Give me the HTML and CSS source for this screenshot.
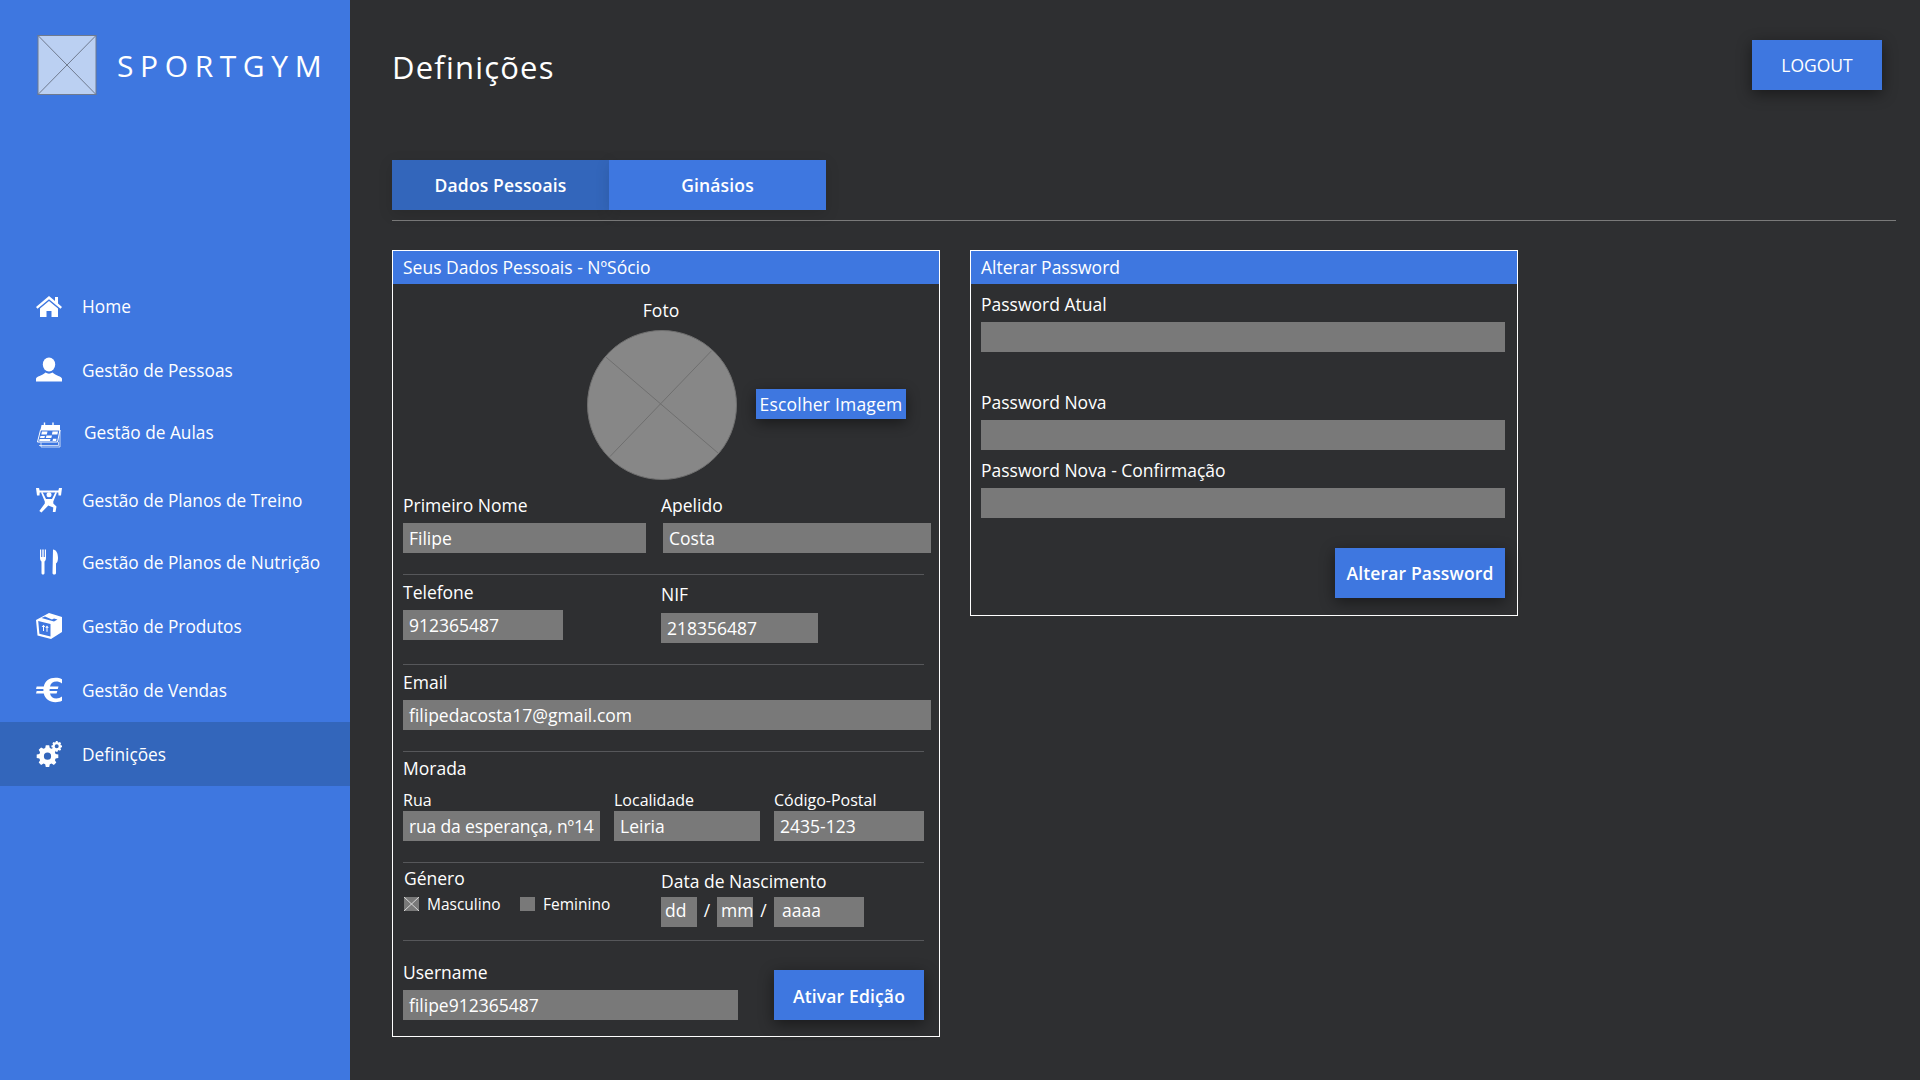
FILE: index.html
```html
<!DOCTYPE html>
<html lang="pt">
<head>
    <meta charset="UTF-8">
    <meta name="viewport" content="width=device-width, initial-scale=1.0">
    <title>SportGym - Definições</title>
    <link rel="stylesheet" href="styles.css">
</head>
<body>
    <div class="app">
        <aside class="sidebar">
            <div class="brand">
                <svg class="brand-logo" viewBox="0 0 59 60">
                    <rect x="0.5" y="0.5" width="58" height="59" fill="#bbd0f2" stroke="#6f7a8e"/>
                    <path d="M0.5 0.5L58.5 59.500M58.5 0.5L0.5 59.500" stroke="#6f7a8e" fill="none"/>
                </svg>
                <span class="brand-name">SPORTGYM</span>
            </div>
            <nav class="nav">
                <a class="nav-item">
                    <svg class="nav-icon" viewBox="0 0 26 26"><path d="M13 3L19 8V4H22V10.500L26 14L24.500 15.800L13 6.300L1.500 15.800L0 14Z"/><path d="M4 15.500L13 8L22 15.500V24H15.500V18H10.500V24H4Z"/></svg>
                    <span>Home</span>
                </a>
                <a class="nav-item">
                    <svg class="nav-icon" viewBox="0 0 26 26"><ellipse cx="13" cy="7.500" rx="6.200" ry="7"/><path d="M0 24.500V21.800C0 19.500 6.500 18.500 9.500 15.500C11.500 17 14.500 17 16.500 15.500C19.500 18.500 26 19.500 26 21.800V24.500Z"/></svg>
                    <span>Gestão de Pessoas</span>
                </a>
                <a class="nav-item nav-aulas">
                    <svg class="nav-icon" viewBox="0 0 26 26">
                        <path d="M5.500 3H24V8H4.500Z"/>
                        <path d="M8.500 0.500V4.500M17 0.500V4.500" stroke="#fff" stroke-width="1.400" fill="none"/>
                        <path d="M4.500 8H24L21.500 20H1.500Z" fill="none" stroke="#fff"/>
                        <path d="M6 9.500H11.500L10.800 12.500H5.300ZM16.500 9.500H22L21.400 12.500H15.900ZM10.500 13.500H16L15.300 16H9.800ZM4.500 14H9L8.400 16H4ZM9 17H14.500L14 19H3.200L3.600 17ZM17 16.800H20.500L20.100 19H16.500Z"/>
                        <path d="M24 8V25H5V20.500" fill="none" stroke="#fff" stroke-opacity="0.7"/>
                        <path d="M22.500 20V23.500H3" fill="none" stroke="#fff" stroke-opacity="0.7"/>
                    </svg>
                    <span>Gestão de Aulas</span>
                </a>
                <a class="nav-item nav-treino">
                    <svg class="nav-icon" viewBox="0 0 26 26">
                        <path d="M0 1H3L3.600 3.500H22.400L23 1H26L25 8.500H22.500L22.300 5.500H3.700L3.500 8.500H1Z"/>
                        <circle cx="13" cy="7.800" r="2.500"/>
                        <path d="M6.500 5L10 12H16L19.500 5L21 5.500L17.300 14.500V16.500L20.500 19.500L19.500 25H16.800L17.300 20.500L12.300 18.500L5.500 25.500L3.300 24L8.800 16.500V14.500L5 5.500Z"/>
                    </svg>
                    <span>Gestão de Planos de Treino</span>
                </a>
                <a class="nav-item nav-nutricao">
                    <svg class="nav-icon" viewBox="0 0 26 26"><path d="M4 0.500H5.200V8H6.300V0.500H7.700V8H8.800V0.500H10V9C10 11 9.200 12 8.500 12.500V24C8.500 26 5.500 26 5.500 24V12.500C4.800 12 4 11 4 9Z"/><path d="M17 0.500C20 0.500 22 4 22 9C22 12 21 14 20 14.500V24C20 26 16.500 26 16.500 24Z"/></svg>
                    <span>Gestão de Planos de Nutrição</span>
                </a>
                <a class="nav-item">
                    <svg class="nav-icon" viewBox="0 0 26 26"><path fill-rule="evenodd" d="M13 0L26 4V19L15 26L1.500 22.500L0 7ZM9 3.500L5.500 5L18 8.500L21.500 6.500L18 5.500L16 6.500ZM2.200 8L3.400 20.800L14.500 23.600V11Z"/><path d="M7 14V18H8V14H9.300L7.500 11.800L5.700 14ZM10.500 14.800V18.800H11.500V14.800H12.800L11 12.600L9.200 14.800Z"/></svg>
                    <span>Gestão de Produtos</span>
                </a>
                <a class="nav-item">
                    <svg class="nav-icon" viewBox="0 0 26 26"><path d="M26 2.200V6.500C24 5 22.300 4.500 20.300 4.500C17 4.500 14.700 6.300 14 9.500H22.500L21.800 12H13.600V14H21.300L20.600 16.500H14C14.700 19.700 17 21.500 20.300 21.500C22.500 21.500 24.300 20.800 26 19.500V23.800C24 24.800 22 25.200 19.500 25.200C13.200 25.200 9 21.800 7.800 16.500H0L0.700 14H7.400V12H0L0.700 9.500H7.800C9 4.200 13.200 0.800 19.500 0.800C22 0.800 24 1.200 26 2.200Z"/></svg>
                    <span>Gestão de Vendas</span>
                </a>
                <a class="nav-item active">
                    <svg class="nav-icon" viewBox="0 0 26 26"><path fill-rule="evenodd" d="M9.800 7H13.200L13.800 9.700L15.500 10.500L17.900 9.100L20.300 11.500L18.900 13.900L19.600 15.600L22.300 16.200V19.600L19.600 20.200L18.900 21.900L20.300 24.300L17.900 26.700L15.500 25.300L13.800 26L13.200 28.700H9.800L9.200 26L7.500 25.300L5.100 26.700L2.700 24.300L4.100 21.900L3.400 20.200L0.700 19.600V16.200L3.400 15.600L4.100 13.900L2.700 11.500L5.100 9.100L7.500 10.500L9.200 9.700ZM11.500 14.300A3.600 3.600 0 1 0 11.500 21.500A3.600 3.600 0 1 0 11.500 14.300Z" transform="translate(0 -2.700)"/><path fill-rule="evenodd" d="M20.500 0H22.200L22.500 1.200L23.400 1.600L24.500 1L25.700 2.200L25.100 3.300L25.400 4.200L26.600 4.500V6.200L25.400 6.500L25.100 7.400L25.700 8.500L24.500 9.700L23.400 9.100L22.500 9.500L22.200 10.700H20.500L20.200 9.500L19.300 9.100L18.200 9.700L17 8.500L17.600 7.400L17.200 6.500L16 6.200V4.500L17.200 4.200L17.600 3.300L17 2.200L18.200 1L19.300 1.600L20.200 1.200ZM21.300 3.300A2 2 0 1 0 21.300 7.300A2 2 0 1 0 21.300 3.300Z" transform="translate(-0.600 0)"/></svg>
                    <span>Definições</span>
                </a>
            </nav>
        </aside>

        <main class="content">
            <header class="topbar">
                <h1 class="page-title">Definições</h1>
                <button class="btn btn-logout">LOGOUT</button>
            </header>

            <div class="tabs">
                <button class="tab tab-active">Dados Pessoais</button>
                <button class="tab">Ginásios</button>
            </div>

            <div class="panels">
                <section class="panel">
                    <div class="panel-head">Seus Dados Pessoais - NºSócio</div>
                    <div class="panel-body">
                        <div class="photo-row">
                            <div class="photo-col">
                                <label class="field-label photo-label">Foto</label>
                                <svg class="photo" viewBox="0 0 150 150">
                                    <circle cx="75" cy="75" r="74.500" fill="#878787" stroke="#6f6f6f"/>
                                    <path d="M18.500 26.700L131 123M124.600 20.700L22.800 126.700" stroke="#6f6f6f" fill="none"/>
                                </svg>
                            </div>
                            <button class="btn btn-photo">Escolher Imagem</button>
                        </div>

                        <div class="row row-name">
                            <div class="field w-nome">
                                <label class="field-label">Primeiro Nome</label>
                                <div class="input">Filipe</div>
                            </div>
                            <div class="field col-right">
                                <label class="field-label">Apelido</label>
                                <div class="input w-apelido">Costa</div>
                            </div>
                        </div>
                        <hr class="sep">

                        <div class="row">
                            <div class="field w-tel">
                                <label class="field-label">Telefone</label>
                                <div class="input">912365487</div>
                            </div>
                            <div class="field col-right col-nif">
                                <label class="field-label">NIF</label>
                                <div class="input w-nif">218356487</div>
                            </div>
                        </div>
                        <hr class="sep">

                        <div class="row">
                            <div class="field w-full">
                                <label class="field-label">Email</label>
                                <div class="input">filipedacosta17@gmail.com</div>
                            </div>
                        </div>
                        <hr class="sep">

                        <div class="row-morada">
                            <label class="field-label">Morada</label>
                            <div class="address">
                                <div class="field">
                                    <label class="small-label">Rua</label>
                                    <div class="input input-rua">rua da esperança, nº14</div>
                                </div>
                                <div class="field">
                                    <label class="small-label">Localidade</label>
                                    <div class="input">Leiria</div>
                                </div>
                                <div class="field">
                                    <label class="small-label">Código-Postal</label>
                                    <div class="input">2435-123</div>
                                </div>
                            </div>
                        </div>
                        <hr class="sep">

                        <div class="row row-extra">
                            <div class="field w-genero">
                                <label class="field-label">Género</label>
                                <div class="checks">
                                    <span class="check check-on">
                                        <svg viewBox="0 0 15 14"><path d="M0 0L15 14M15 0L0 14" stroke="#d8d8d8" fill="none"/></svg>
                                    </span>
                                    <span class="check-text check-text-m">Masculino</span>
                                    <span class="check"></span>
                                    <span class="check-text">Feminino</span>
                                </div>
                            </div>
                            <div class="field col-date">
                                <label class="field-label">Data de Nascimento</label>
                                <div class="date">
                                    <div class="input input-dd">dd</div>
                                    <span class="date-sep">/</span>
                                    <div class="input input-dd">mm</div>
                                    <span class="date-sep">/</span>
                                    <div class="input input-yy">aaaa</div>
                                </div>
                            </div>
                        </div>
                        <hr class="sep sep-tight">

                        <div class="row row-user">
                            <div class="field w-user">
                                <label class="field-label">Username</label>
                                <div class="input">filipe912365487</div>
                            </div>
                            <button class="btn btn-action btn-edit">Ativar Edição</button>
                        </div>
                    </div>
                </section>

                <section class="panel">
                    <div class="panel-head">Alterar Password</div>
                    <div class="panel-body panel-body-pw">
                        <div class="field pw-first">
                            <label class="field-label">Password Atual</label>
                            <div class="input"></div>
                        </div>
                        <div class="field pw-second">
                            <label class="field-label">Password Nova</label>
                            <div class="input"></div>
                        </div>
                        <div class="field pw-third">
                            <label class="field-label">Password Nova - Confirmação</label>
                            <div class="input"></div>
                        </div>
                        <button class="btn btn-action btn-password">Alterar Password</button>
                    </div>
                </section>
            </div>
        </main>
    </div>
</body>
</html>
```

FILE: styles.css
```css
* {
    box-sizing: border-box;
}
body {
    margin: 0;
    background-color: #2e2f31;
    color: #fff;
    font-family: "Open Sans", "Noto Sans", sans-serif;
    font-size: 17.5px;
}
.app {
    display: flex;
    min-height: 1080px;
}

/* sidebar */
.sidebar {
    width: 350px;
    flex-shrink: 0;
    background-color: #3e77e0;
}
.brand {
    display: flex;
    align-items: flex-start;
    height: 95px;
    padding: 35px 0 0 37px;
}
.brand-logo {
    width: 60px;
    height: 60px;
}
.brand-name {
    margin-left: 20px;
    font-size: 30px;
    letter-spacing: 6.6px;
    line-height: 62px;
}
.nav {
    margin-top: 179px;
}
.nav-item {
    display: flex;
    align-items: center;
    height: 64px;
    padding-left: 36px;
}
.nav-item span {
    margin-left: 20px;
    font-size: 17.3px;
}
.nav-item.active {
    background-color: #3366bb;
}
.nav-icon {
    width: 26px;
    height: 26px;
    fill: #fff;
    flex-shrink: 0;
}
.nav-aulas {
    margin-top: -2px;
}
.nav-aulas span {
    margin-left: 22px;
}
.nav-aulas .nav-icon {
    margin-top: 6px;
}
.nav-treino {
    margin-top: 4px;
}
.nav-nutricao {
    margin-top: -2px;
}

/* main */
.content {
    flex: 1;
    padding: 40px 24px 0 42px;
}
.topbar {
    display: flex;
    justify-content: space-between;
    align-items: flex-start;
    height: 50px;
    padding-right: 14px;
}
.page-title {
    margin: 0;
    font-size: 31px;
    font-weight: 400;
    letter-spacing: 1.2px;
    line-height: 54px;
}
.btn {
    border: none;
    background-color: #3e77e0;
    color: #fff;
    font-family: inherit;
    font-size: 17.5px;
    padding: 0;
    box-shadow: 0 4px 14px rgba(0, 0, 0, 0.45);
}
.btn-logout {
    width: 130px;
    height: 50px;
}
.tabs {
    display: flex;
    margin-top: 70px;
    padding-bottom: 10px;
    border-bottom: 1px solid #7a7a7a;
}
.tab {
    width: 217px;
    height: 50px;
    border: none;
    background-color: #3e77e0;
    color: #fff;
    font-family: inherit;
    font-size: 17.5px;
    font-weight: 600;
    letter-spacing: 0.15px;
    padding: 0;
    box-shadow: 0 4px 14px rgba(0, 0, 0, 0.12);
}
.tab-active {
    background-color: #3366bb;
}
.panels {
    display: flex;
    align-items: flex-start;
    gap: 30px;
    margin-top: 29px;
}
.panel {
    width: 548px;
    border: 1px solid #fff;
}
.panel-head {
    height: 33px;
    line-height: 33px;
    padding-left: 10px;
    background-color: #3e77e0;
}
.panel-body {
    padding: 15px 8px 16px 10px;
}
.panel-body-pw {
    padding: 0 12px 17px 10px;
    display: flex;
    flex-direction: column;
}

/* fields */
.field-label {
    display: block;
    height: 24px;
    line-height: 22px;
}
.small-label {
    display: block;
    height: 21px;
    line-height: 21px;
    font-size: 16px;
}
.field-label + .input {
    margin-top: 5px;
}
.input {
    height: 30px;
    line-height: 30px;
    padding-left: 6px;
    background-color: #797979;
    white-space: nowrap;
    overflow: hidden;
}
.input-rua {
    letter-spacing: -0.15px;
}
.row {
    display: flex;
}
.sep {
    height: 1px;
    margin: 21px 7px 6px 0;
    border: none;
    background-color: #56575a;
}
.sep-tight {
    margin-top: 13px;
    margin-bottom: 0;
}

/* foto */
.photo-row {
    display: flex;
}
.photo-col {
    width: 150px;
    margin-left: 184px;
}
.photo-label {
    text-align: center;
    margin-left: -2px;
}
.photo {
    display: block;
    width: 150px;
    height: 150px;
    margin-top: 7px;
}
.btn-photo {
    width: 150px;
    height: 30px;
    align-self: flex-end;
    margin: 0 0 61px 19px;
    letter-spacing: 0.2px;
}
.row-name {
    margin-top: 14px;
}

/* larguras */
.w-nome {
    width: 243px;
}
.col-right {
    margin-left: 15px;
}
.w-apelido {
    width: 268px;
    margin-left: 2px;
}
.w-tel {
    width: 160px;
}
.col-right.col-nif {
    margin-left: 98px;
    padding-top: 2px;
}
.col-nif .input {
    margin-top: 6px;
}
.w-nif {
    width: 157px;
}
.w-full {
    width: 528px;
}
.row-morada {
    margin-top: -1px;
}
.address {
    display: grid;
    grid-template-columns: 197px 146px 150px;
    column-gap: 14px;
    margin-top: 9px;
}
.row-extra {
    margin-top: -2px;
}
.w-genero {
    width: 258px;
    padding-left: 1px;
}
.col-date {
    padding-top: 3px;
}
.checks {
    display: flex;
    align-items: center;
    height: 14px;
    margin-top: 6px;
    font-size: 15.5px;
}
.check {
    width: 15px;
    height: 14px;
    background-color: #797979;
    flex-shrink: 0;
}
.check svg {
    display: block;
    width: 15px;
    height: 14px;
}
.check-text {
    margin-left: 8px;
}
.check-text-m {
    width: 93px;
}
.date {
    display: flex;
    margin-top: 3px;
    height: 30px;
    line-height: 26px;
}
.date .input {
    line-height: 26px;
}
.input-dd {
    width: 36px;
    padding-left: 4px;
    padding-right: 0;
}
.input-yy {
    width: 90px;
    padding-left: 8px;
}
.date-sep {
    width: 20px;
    text-align: center;
}
.date-sep:nth-child(4) {
    width: 21px;
}
.row-user {
    align-items: flex-end;
    margin-top: 20px;
}
.w-user {
    width: 335px;
}
.btn-action {
    height: 50px;
    font-weight: 600;
    letter-spacing: 0.15px;
}
.btn-edit {
    width: 150px;
    margin-left: 36px;
    padding-top: 2px;
}
.pw-first {
    margin-top: 9px;
}
.pw-second {
    margin-top: 39px;
}
.pw-third {
    margin-top: 9px;
}
.btn-password {
    width: 170px;
    margin-top: 30px;
    align-self: flex-end;
}
```
